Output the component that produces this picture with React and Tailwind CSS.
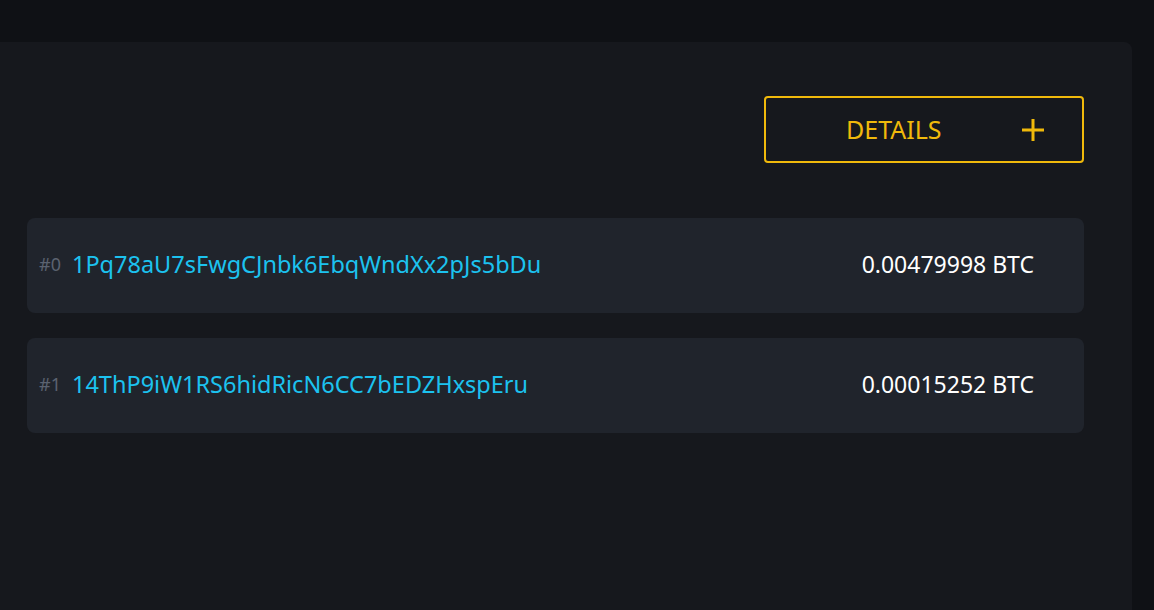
import React from "react";

const outputs = [
  { n: 0, address: "1Pq78aU7sFwgCJnbk6EbqWndXx2pJs5bDu", amount: "0.00479998 BTC" },
  { n: 1, address: "14ThP9iW1RS6hidRicN6CC7bEDZHxspEru", amount: "0.00015252 BTC" },
];

export default function App() {
  return (
    <div
      className="min-h-screen w-full bg-[#0f1115] pt-[42px] overflow-hidden"
      style={{ fontFamily: '"Noto Sans", sans-serif' }}
    >
      <div className="w-[1132px] h-[568px] bg-[#16181d] rounded-tr-lg flex flex-col">
        <div className="flex justify-end pr-[48px] pt-[54px]">
          <button className="w-[320px] h-[67px] border-2 border-[#f0b90b] rounded-[4px] flex items-center text-[#f0b90b]">
            <span className="ml-[80px] text-[25px] leading-none">DETAILS</span>
            <svg className="ml-auto mr-[37px]" width="24" height="24" viewBox="0 0 24 24" fill="none">
              <path d="M12 1v22M1 12h22" stroke="#f0b90b" strokeWidth="3" />
            </svg>
          </button>
        </div>

        <div className="mt-[55px] ml-[27px] w-[1057px] flex flex-col gap-[25px]">
          {outputs.map((o) => (
            <div
              key={o.n}
              className="h-[95px] bg-[#20242c] rounded-lg flex items-center pl-[12px] pr-[50px] pb-[2px]"
            >
              <span className="text-[18px] text-[#5b6270] mr-[11px]">#{o.n}</span>
              <span className="text-[23.5px] text-[#1cc2ef]">{o.address}</span>
              <span className="ml-auto text-[23px] text-white">{o.amount}</span>
            </div>
          ))}
        </div>
      </div>
    </div>
  );
}
